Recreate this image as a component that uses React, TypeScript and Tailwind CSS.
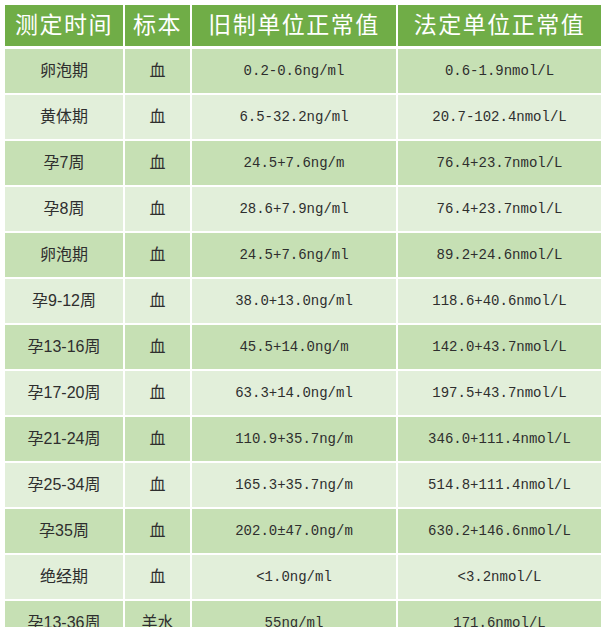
const rows = [
  ["卵泡期", "血", "0.2-0.6ng/ml", "0.6-1.9nmol/L"],
  ["黄体期", "血", "6.5-32.2ng/ml", "20.7-102.4nmol/L"],
  ["孕7周", "血", "24.5+7.6ng/m", "76.4+23.7nmol/L"],
  ["孕8周", "血", "28.6+7.9ng/ml", "76.4+23.7nmol/L"],
  ["卵泡期", "血", "24.5+7.6ng/ml", "89.2+24.6nmol/L"],
  ["孕9-12周", "血", "38.0+13.0ng/ml", "118.6+40.6nmol/L"],
  ["孕13-16周", "血", "45.5+14.0ng/m", "142.0+43.7nmol/L"],
  ["孕17-20周", "血", "63.3+14.0ng/ml", "197.5+43.7nmol/L"],
  ["孕21-24周", "血", "110.9+35.7ng/m", "346.0+111.4nmol/L"],
  ["孕25-34周", "血", "165.3+35.7ng/m", "514.8+111.4nmol/L"],
  ["孕35周", "血", "202.0±47.0ng/m", "630.2+146.6nmol/L"],
  ["绝经期", "血", "<1.0ng/ml", "<3.2nmol/L"],
  ["孕13-36周", "羊水", "55ng/ml", "171.6nmol/L"],
];

const headers = ["测定时间", "标本", "旧制单位正常值", "法定单位正常值"];

const cjk = "font-['Liberation_Sans','Noto_Sans_CJK_SC',sans-serif]";
const mono = "font-['Liberation_Mono','Noto_Sans_CJK_SC',monospace]";

export default function App() {
  return (
    <div className="min-h-screen bg-white pl-[5px] pt-[5px]">
      <div className="grid grid-cols-[118px_65px_204px_1fr] gap-[2px] w-[596px]">
        {headers.map((h) => (
          <div
            key={h}
            className={`${cjk} bg-[#70ad47] h-[41px] flex items-center justify-center text-white text-[23px] tracking-[1.5px] mb-[1px]`}
          >
            {h}
          </div>
        ))}
        {rows.map((r, i) => {
          const bg = i % 2 === 0 ? "bg-[#c6e0b4]" : "bg-[#e2efda]";
          return r.map((cell, j) => (
            <div
              key={`${i}-${j}`}
              className={`${j < 2 ? cjk + " text-[16px]" : mono + " text-[14px]"} ${bg} h-[44px] flex items-center justify-center text-[#2e2e2e]`}
            >
              {cell}
            </div>
          ));
        })}
      </div>
    </div>
  );
}
